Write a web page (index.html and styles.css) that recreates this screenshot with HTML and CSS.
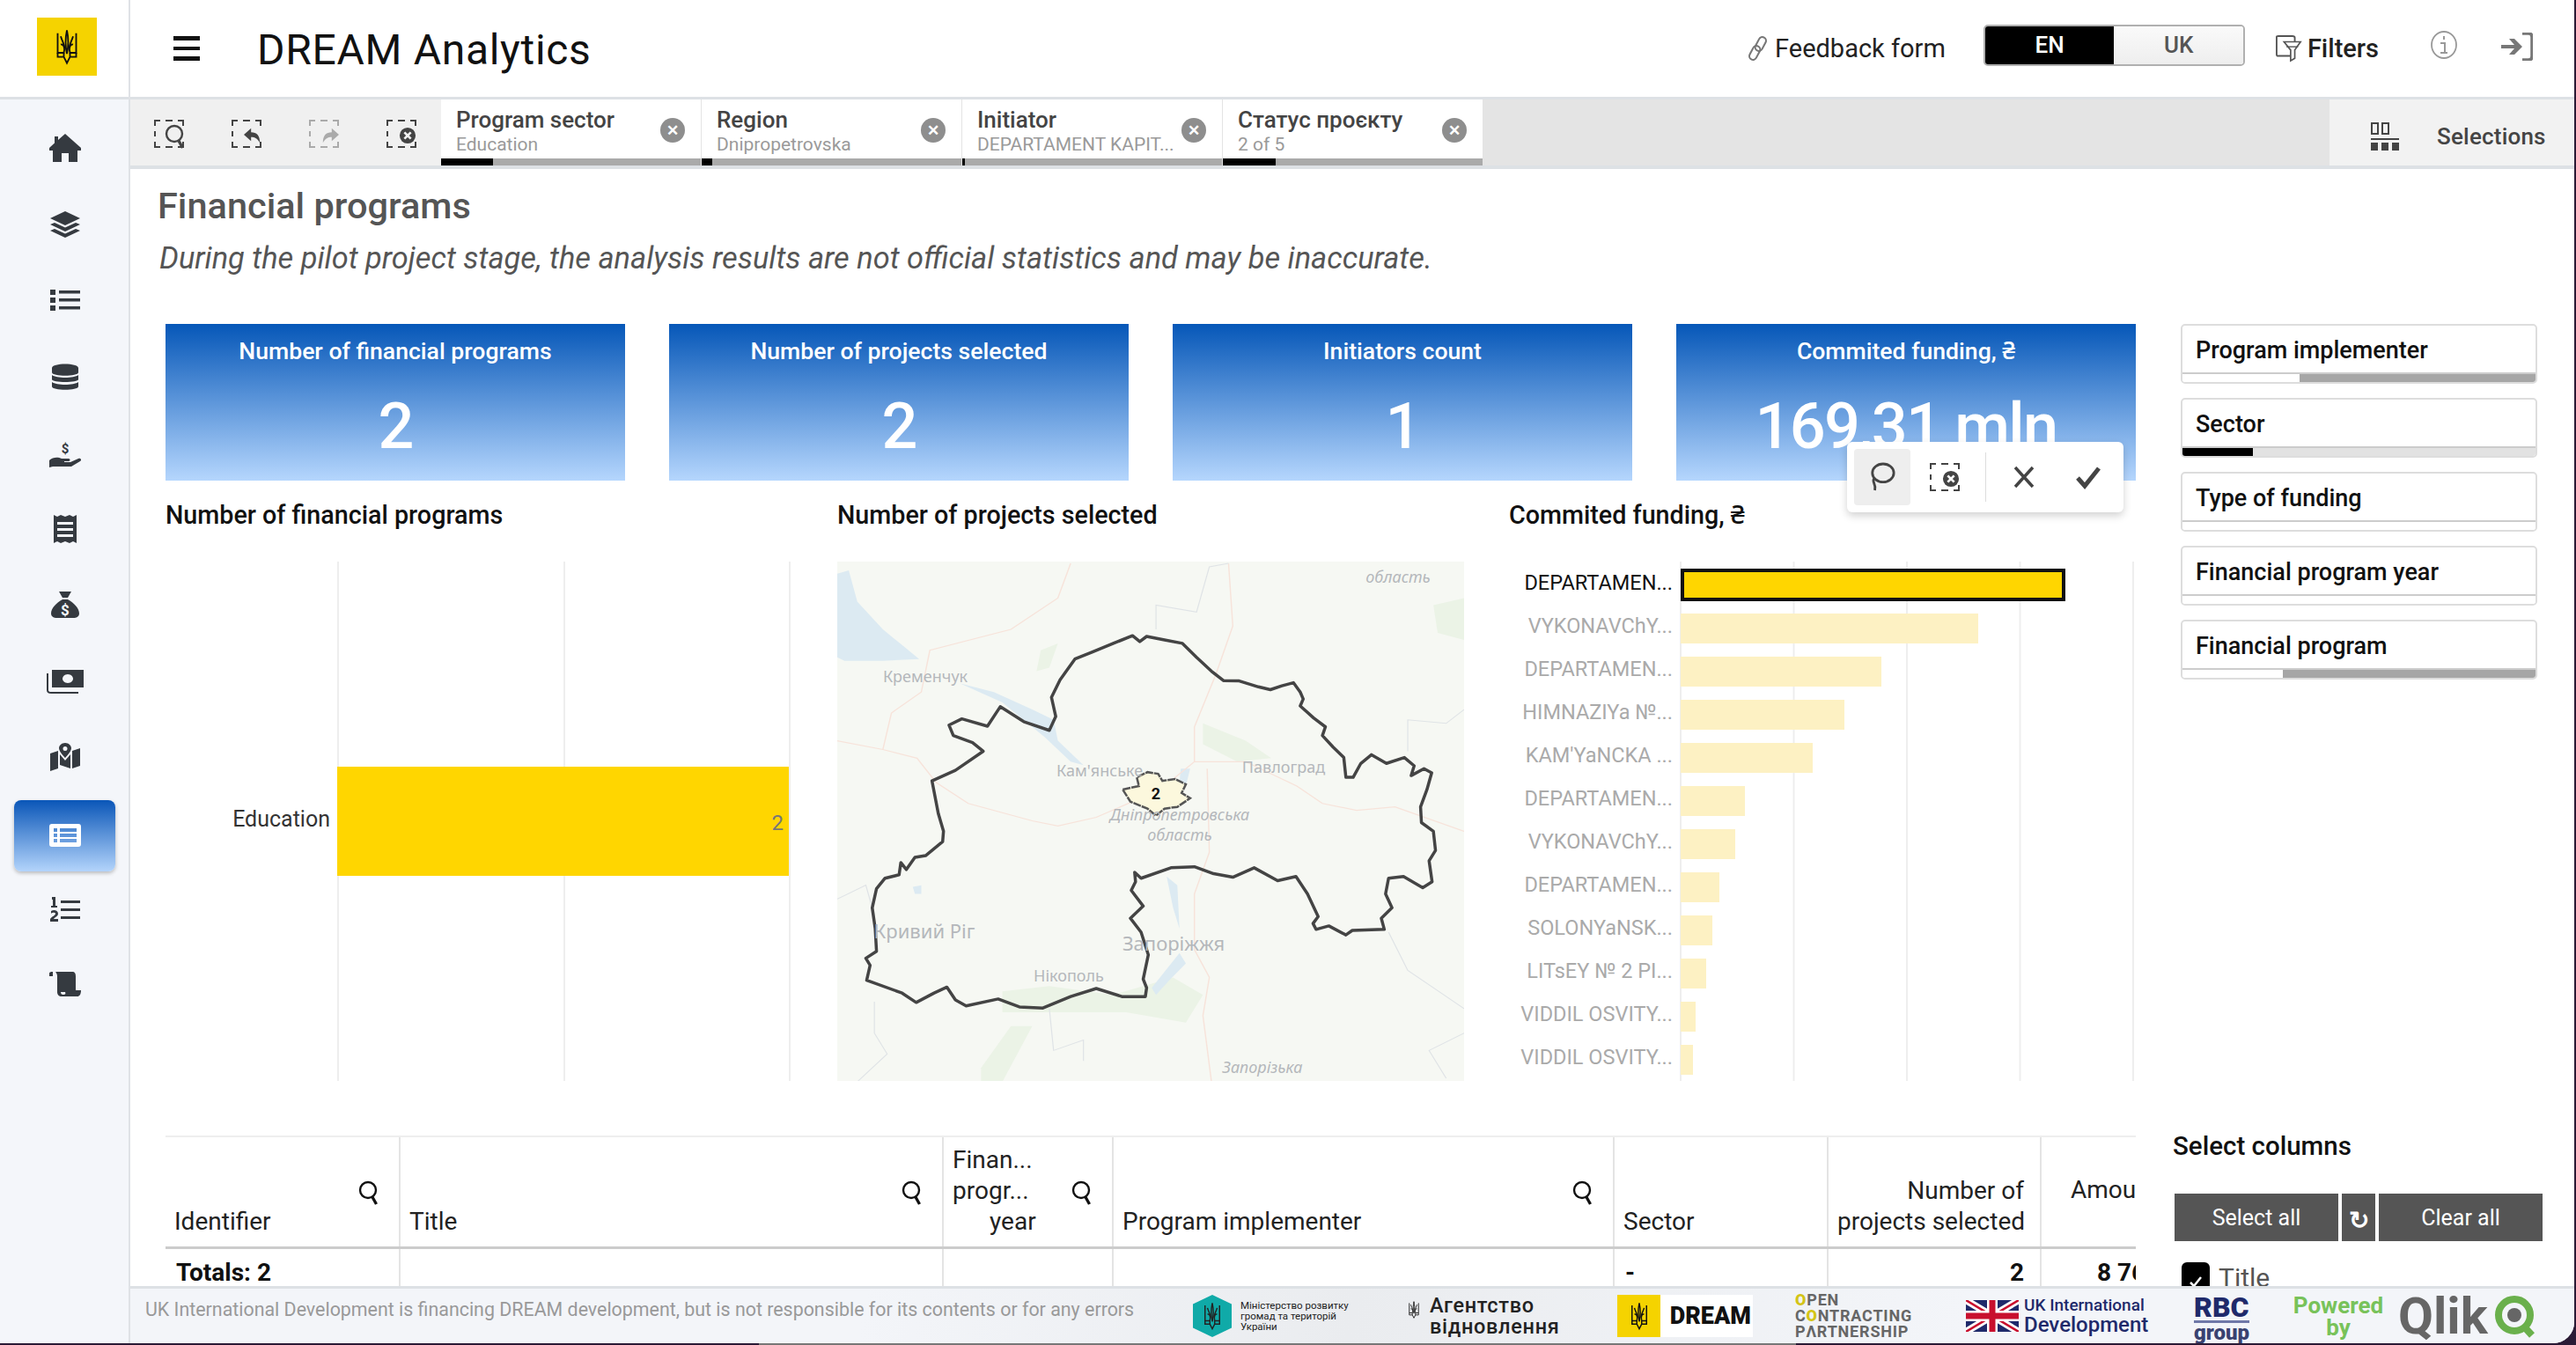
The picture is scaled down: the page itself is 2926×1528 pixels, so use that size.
FILE: index.html
```html
<!DOCTYPE html>
<html lang="en">
<head>
<meta charset="utf-8">
<title>DREAM Analytics</title>
<link rel="stylesheet" href="styles.css">
</head>
<body>
<svg class="defs" width="0" height="0" aria-hidden="true">
  <symbol id="trident" viewBox="0 0 24 36">
    <g fill="none" stroke="currentColor" stroke-width="1.6">
      <path d="M12 2C13.500 9 14 16 12 25C10 16 10.500 9 12 2Z"/>
      <path d="M3 5V24H9C10.500 19 8.500 15 6 16M6 8C7 12 9.500 15 10 20"/>
      <path d="M21 5V24H15C13.500 19 15.500 15 18 16M18 8C17 12 14.500 15 14 20"/>
      <path d="M3 24V28H9L12 34L15 28H21V24M9 24V28M15 24V28"/>
    </g>
  </symbol>
  <symbol id="dash" viewBox="0 0 34 32">
    <path d="M1 7V1H7M13 1H21M27 1H33V7M1 13V19M1 25V31H7M13 31H21M27 31H33V25" fill="none" stroke="currentColor" stroke-width="2"/>
  </symbol>
  <symbol id="loupe" viewBox="0 0 24 28">
    <circle cx="11" cy="11" r="9" fill="none" stroke="currentColor" stroke-width="2.400"/>
    <path d="M16 19L20.500 27" stroke="currentColor" stroke-width="3.400"/>
  </symbol>
</svg>

<div class="app">
  <aside class="sidebar">
    <div class="logo-cell">
      <div class="logo"><svg class="logo-tri"><use href="#trident"/></svg></div>
    </div>
    <nav class="nav">
      <a class="nav-item"><svg viewBox="0 0 36 36"><path d="M18 2L36 18V21H32V34H22V24H14V34H4V21H0V18L6 12.500V5H10V9Z"/></svg></a>
      <a class="nav-item"><svg viewBox="0 0 36 36"><path d="M18 3L35 11L18 19L1 11ZM1 18L6 16L18 21.500L30 16L35 18L18 26ZM1 25L6 23L18 28.500L30 23L35 25L18 33Z"/></svg></a>
      <a class="nav-item"><svg viewBox="0 0 36 36"><path d="M1 6H7V12H1ZM11 7H35V10.500H11ZM1 15H7V21H1ZM11 16H35V19.500H11ZM1 24H7V30H1ZM11 25H35V28.500H11Z"/></svg></a>
      <a class="nav-item"><svg viewBox="0 0 36 36"><path d="M3 8C3 2 33 2 33 8V13C33 18 3 18 3 13ZM3 16C8 20 28 20 33 16V21C33 25 3 25 3 21ZM3 24C8 28 28 28 33 24V29C33 34 3 34 3 29Z"/></svg></a>
      <a class="nav-item"><svg viewBox="0 0 36 36"><path d="M0 27C4 23 10 23 14 25H22C24 25 24 28 22 28H17V29H24L33 25C36 24 37 27 35 28L25 34H4L0 35Z"/><text x="18" y="19" class="nav-dollar">$</text></svg></a>
      <a class="nav-item"><svg viewBox="0 0 36 36"><path d="M5 2L9 4L13 2L18 4L23 2L27 4L31 2V34L27 32L23 34L18 32L13 34L9 32L5 34ZM9 10V13H27V10ZM9 17V20H27V17ZM9 24V27H27V24Z"/></svg></a>
      <a class="nav-item"><svg viewBox="0 0 36 36"><path d="M11 3H25L21 10H15ZM15 12H21C28 16 34 22 34 28C34 32 30 33 28 33H8C6 33 2 32 2 28C2 22 8 16 15 12Z"/><text x="18" y="30" class="nav-dollar inv">$</text></svg></a>
      <a class="nav-item"><svg class="wide" viewBox="0 0 42 36"><path d="M6 5H42V25H6ZM24 10C20 10 18 13 18 15C18 17 20 20 24 20C28 20 30 17 30 15C30 13 28 10 24 10Z" fill-rule="evenodd"/><path d="M1 9V28C1 30 3 31 5 31H36" fill="none" stroke="currentColor" stroke-width="2"/></svg></a>
      <a class="nav-item"><svg viewBox="0 0 36 36"><path d="M1 14L10 11V31L1 34ZM26 11L35 8V28L26 31ZM12 15L18 22L24 15V31L12 27ZM18 2C22 2 25 5 25 8C25 12 18 19 18 19C18 19 11 12 11 8C11 5 14 2 18 2ZM18 6A2.500 2.500 0 1 0 18 11A2.500 2.500 0 1 0 18 6Z" fill-rule="evenodd"/></svg></a>
      <a class="nav-item active"><svg viewBox="0 0 36 36"><path d="M3 5H33C35 5 36 6 36 8V28C36 30 35 31 33 31H3C1 31 0 30 0 28V8C0 6 1 5 3 5ZM5 10V14H9V10ZM12 10V14H31V10ZM5 16V20H9V16ZM12 16V20H31V16ZM5 22V26H9V22ZM12 22V26H31V22Z" fill-rule="evenodd"/></svg></a>
      <a class="nav-item"><svg viewBox="0 0 36 36"><path d="M13 8H35V11H13ZM13 17H35V20H13ZM13 26H35V29H13ZM3 4H7V14H9V16H2V14H4V7H3ZM2 20C5 18 10 19 10 23C10 26 6 27 5 29H10V32H1V29C3 26 7 25 7 23C7 22 4 21 2 23Z"/></svg></a>
      <a class="nav-item"><svg viewBox="0 0 36 36"><path d="M0 5C0 3 3 3 4 3V8H0ZM7 3H26C29 3 30 5 30 8V24H36C36 29 34 31 32 31H14C11 31 9 29 9 26V8C9 6 8 4 7 3ZM13 26C13 28 14 29 16 29C18 29 19 28 18 26Z"/></svg></a>
    </nav>
  </aside>

  <header class="topbar">
    <div class="burger"><i></i><i></i><i></i></div>
    <h1 class="brand">DREAM Analytics</h1>
    <div class="top-actions">
      <a class="feedback">
        <svg class="link-ico" viewBox="0 0 28 36"><g fill="none" stroke="#777" stroke-width="2.500"><rect x="13" y="2" width="10" height="20" rx="5" transform="rotate(28 18 12)"/><rect x="5" y="14" width="10" height="20" rx="5" transform="rotate(28 10 24)"/></g></svg>
        Feedback form
      </a>
      <div class="lang"><span class="lang-on">EN</span><span class="lang-off">UK</span></div>
      <a class="filters">
        <svg class="filter-ico" viewBox="0 0 32 32"><path d="M20 25H2C1 25 1 24 1 23V2C1 1 2 1 3 1H20C22 1 23 2 23 3V8" fill="none" stroke="#555" stroke-width="2"/><path d="M10 9H30L23 19V29L18 32V19Z" transform="translate(0,-1)" fill="#fff" stroke="#555" stroke-width="1.800"/><path d="M13 14H27" stroke="#555" stroke-width="1.500"/></svg>
        Filters
      </a>
      <svg class="info-ico" viewBox="0 0 30 32"><ellipse cx="15" cy="16" rx="14" ry="15" fill="none" stroke="#999" stroke-width="1.800"/><path d="M15 6V10M11 14H16V24M11 25H19" fill="none" stroke="#999" stroke-width="2"/></svg>
      <svg class="exit-ico" viewBox="0 0 36 32"><path d="M24 1H31C34 1 35 3 35 5V27C35 29 34 31 31 31H24" fill="none" stroke="#777" stroke-width="3.500"/><path d="M0 14H15L9 7H15L24 16L15 25H9L15 18H0Z" fill="#777"/></svg>
    </div>
  </header>

  <div class="toolbar">
    <div class="tools">
      <span class="tool"><svg class="t-dash"><use href="#dash"/></svg><svg class="t-in loupe"><use href="#loupe"/></svg></span>
      <span class="tool"><svg class="t-dash"><use href="#dash"/></svg><svg class="t-in" viewBox="0 0 22 22"><path d="M9 2V7C16 7 20 11 20 20C17 15 14 13 9 13V18L0 10Z"/></svg></span>
      <span class="tool off"><svg class="t-dash"><use href="#dash"/></svg><svg class="t-in" viewBox="0 0 22 22"><path d="M13 2V7C6 7 2 11 2 20C5 15 8 13 13 13V18L22 10Z"/></svg></span>
      <span class="tool"><svg class="t-dash"><use href="#dash"/></svg><svg class="t-in" viewBox="0 0 22 22"><circle cx="11" cy="11" r="10"/><path d="M7 7L15 15M15 7L7 15" stroke="#f2f2f2" stroke-width="3"/></svg></span>
    </div>
    <div class="tab">
      <div class="tab-body"><div class="tab-text"><b>Program sector</b><small>Education</small></div><span class="tab-x">✕</span></div>
      <div class="tab-bar"><i style="width:59px"></i></div>
    </div>
    <div class="tab">
      <div class="tab-body"><div class="tab-text"><b>Region</b><small>Dnipropetrovska</small></div><span class="tab-x">✕</span></div>
      <div class="tab-bar"><i style="width:12px"></i></div>
    </div>
    <div class="tab">
      <div class="tab-body"><div class="tab-text"><b>Initiator</b><small>DEPARTAMENT KAPIT...</small></div><span class="tab-x">✕</span></div>
      <div class="tab-bar"><i style="width:3px"></i></div>
    </div>
    <div class="tab">
      <div class="tab-body"><div class="tab-text"><b>Статус проєкту</b><small>2 of 5</small></div><span class="tab-x">✕</span></div>
      <div class="tab-bar"><i style="width:60px"></i></div>
    </div>
    <div class="tool-fill"></div>
    <div class="selections">
      <svg class="sel-ico" viewBox="0 0 32 32"><path d="M1 1H8V13H1ZM13 1H20V13H13Z" fill="none" stroke="#444" stroke-width="2"/><path d="M0 18H32V20H0ZM0 23H8V32H0ZM12 23H20V32H12ZM24 23H32V32H24Z" fill="#444"/></svg>
      <span>Selections</span>
    </div>
  </div>

  <main class="main">
    <h2 class="page-title">Financial programs</h2>
    <p class="page-note">During the pilot project stage, the analysis results are not official statistics and may be inaccurate.</p>
    <div class="columns">
      <div class="left">
        <section class="kpis">
          <div class="kpi"><div class="kpi-t">Number of financial programs</div><div class="kpi-v">2</div></div>
          <div class="kpi"><div class="kpi-t">Number of projects selected</div><div class="kpi-v">2</div></div>
          <div class="kpi"><div class="kpi-t">Initiators count</div><div class="kpi-v">1</div></div>
          <div class="kpi"><div class="kpi-t">Commited funding, ₴</div><div class="kpi-v">169,31 mln</div></div>
        </section>
        <div class="popup">
          <span class="pop-btn on"><svg viewBox="0 0 32 36"><ellipse cx="17" cy="13" rx="13" ry="11" fill="none" stroke="#444" stroke-width="3"/><path d="M6 20C3 24 9 26 7 34" fill="none" stroke="#444" stroke-width="3"/></svg></span>
          <span class="pop-btn sel"><svg class="t-dash"><use href="#dash"/></svg><svg class="t-in" viewBox="0 0 22 22"><circle cx="11" cy="11" r="10"/><path d="M7 7L15 15M15 7L7 15" stroke="#fff" stroke-width="3"/></svg></span>
          <i class="pop-sep"></i>
          <span class="pop-btn cancel"><svg viewBox="0 0 30 30"><path d="M5 4L25 26M25 4L5 26" stroke="#444" stroke-width="3.500"/></svg></span>
          <span class="pop-btn ok"><svg viewBox="0 0 30 30"><path d="M3 16L11 25L27 5" fill="none" stroke="#444" stroke-width="5"/></svg></span>
        </div>
        <section class="charts">
          <div class="chart">
            <h3 class="chart-t">Number of financial programs</h3>
            <div class="c1">
              <div class="c1-label">Education</div>
              <div class="c1-plot"><div class="c1-bar">2</div></div>
            </div>
          </div>
          <div class="chart">
            <h3 class="chart-t">Number of projects selected</h3>
            <svg class="map" viewBox="0 0 712 590">
              <rect width="712" height="590" fill="#f6f8f3"/>
              <g transform="scale(0.4847 0.3953) translate(-43 -45)">
                <g fill="#ebf3e6">
                  <path d="M900 510L1000 560L1060 610L980 620L900 570Z"/>
                  <path d="M1440 170L1512 150V270L1450 250Z"/>
                  <path d="M430 1280L540 1265L690 1290L830 1240L900 1290L860 1370L720 1340L560 1340L430 1340Z"/>
                  <path d="M380 1500L450 1380L500 1380L430 1540H380Z"/>
                  <path d="M520 300L560 280L540 350L510 360Z"/>
                </g>
                <g fill="#dceaf2">
                  <path d="M43 80L70 70L90 160L150 240L200 290L235 325L150 330L60 330L43 320Z"/>
                  <path d="M330 395L410 420L500 470L550 500L560 560L620 630L590 620L530 550L430 450Z"/>
                  <path d="M848 640L870 640L860 690L845 680Z"/>
                  <path d="M815 950L840 975L845 1100L830 1040ZM845 1170L860 1200L820 1250L790 1290L780 1270Z"/>
                  <path d="M220 980L240 975L240 1000L225 1000Z"/>
                </g>
                <g fill="none" stroke="#f7e3da" stroke-width="3">
                  <path d="M43 560L150 585L230 610L275 680L350 740L500 790L560 805L650 780L800 700L880 620L1000 620L1120 690L1180 740L1260 760L1350 750L1512 820"/>
                  <path d="M150 585L170 480L240 420L260 300L450 240L560 150L590 50"/>
                  <path d="M960 50L970 230L930 370L880 520L880 620M910 640L915 880L880 1000L880 1160L915 1240L900 1350L920 1540"/>
                </g>
                <g fill="none" stroke="#dfe3e6" stroke-width="2.500">
                  <path d="M43 1015L110 975L125 1040M130 1310L130 1400L160 1460L90 1540"/>
                  <path d="M1512 470L1470 510L1380 500L1380 590M1335 1110L1380 1220L1440 1270L1512 1330"/>
                  <path d="M790 240L790 170L885 190L915 60L960 50"/>
                  <path d="M540 1330L550 1450L620 1420L620 1480"/>
                  <path d="M1512 1400L1430 1450L1470 1530"/>
                </g>
                <path class="map-outline" d="M600 325L640 305L690 280L735 258L752 275L768 260L810 270L852 280L885 320L920 360L948 387L985 388L1030 405L1058 413L1085 402L1112 393L1128 420L1135 440L1128 460L1160 495L1187 520L1180 545L1205 578L1230 608L1235 665L1252 665L1270 625L1295 600L1330 625L1372 608L1395 632L1388 660L1418 640L1436 652L1425 700L1410 750L1412 795L1440 820L1445 875L1430 905L1437 965L1415 982L1370 950L1335 955L1328 1000L1343 1040L1318 1070L1325 1102L1250 1105L1235 1118L1195 1092L1165 1102L1158 1085L1170 1065L1145 1000L1118 950L1075 962L1020 925L970 952L925 942L880 922L825 925L755 955L740 938L742 965L732 990L760 1035L730 1070L755 1110L772 1175L760 1245L768 1270L765 1295L710 1295L650 1272L590 1295L525 1328L470 1325L420 1302L345 1322L320 1305L300 1268L270 1285L228 1312L195 1285L112 1248L120 1205L110 1185L135 1165L132 1100L125 1040L135 985L155 955L188 945L192 910L205 930L225 895L250 890L290 850L292 820L280 770L265 675L320 645L385 590L360 565L315 545L305 515L335 497L395 518L425 462L480 505L540 530L555 490L545 435L565 385Z"/>
                <path class="map-city" d="M712 700L750 690L745 665L770 650L795 655L805 675L835 670L860 685L850 710L870 725L840 750L810 755L790 775L770 755L730 735Z"/>
              </g>
              <g class="map-labels">
                <text x="100" y="137">Кременчук</text>
                <text x="298" y="244">Кам'янське</text>
                <text x="507" y="240">Павлоград</text>
                <text x="389" y="294" class="it">Дніпропетровська</text>
                <text x="389" y="317" class="it">область</text>
                <text x="99" y="428" class="big">Кривий Ріг</text>
                <text x="382" y="442" class="big">Запоріжжя</text>
                <text x="263" y="477">Нікополь</text>
                <text x="483" y="581" class="it">Запорізька</text>
                <text x="637" y="24" class="it">область</text>
              </g>
              <text x="362" y="270" class="map-count">2</text>
            </svg>
          </div>
          <div class="chart">
            <h3 class="chart-t">Commited funding, ₴</h3>
            <div class="c3">
              <div class="c3-labels">
                <div class="sel">DEPARTAMEN...</div>
                <div>VYKONAVChY...</div>
                <div>DEPARTAMEN...</div>
                <div>HIMNAZIYa №...</div>
                <div>KAM'YaNCKA ...</div>
                <div>DEPARTAMEN...</div>
                <div>VYKONAVChY...</div>
                <div>DEPARTAMEN...</div>
                <div>SOLONYaNSK...</div>
                <div>LITsEY № 2 PI...</div>
                <div>VIDDIL OSVITY...</div>
                <div>VIDDIL OSVITY...</div>
              </div>
              <div class="c3-plot">
                <div class="c3-row"><i class="sel" style="width:437px"></i></div>
                <div class="c3-row"><i style="width:338px"></i></div>
                <div class="c3-row"><i style="width:228px"></i></div>
                <div class="c3-row"><i style="width:186px"></i></div>
                <div class="c3-row"><i style="width:150px"></i></div>
                <div class="c3-row"><i style="width:73px"></i></div>
                <div class="c3-row"><i style="width:62px"></i></div>
                <div class="c3-row"><i style="width:44px"></i></div>
                <div class="c3-row"><i style="width:36px"></i></div>
                <div class="c3-row"><i style="width:29px"></i></div>
                <div class="c3-row"><i style="width:17px"></i></div>
                <div class="c3-row"><i style="width:14px"></i></div>
              </div>
            </div>
          </div>
        </section>
        <div class="table-wrap">
          <table class="grid">
            <colgroup><col class="w1"><col class="w2"><col class="w3"><col class="w4"><col class="w5"><col class="w6"><col class="w7"></colgroup>
            <thead>
              <tr>
                <th>Identifier<svg class="q"><use href="#loupe"/></svg></th>
                <th>Title<svg class="q"><use href="#loupe"/></svg></th>
                <th class="narrow">Finan...<br>progr...<br><span class="yr">year</span><svg class="q"><use href="#loupe"/></svg></th>
                <th>Program implementer<svg class="q"><use href="#loupe"/></svg></th>
                <th>Sector</th>
                <th class="num">Number of<br>projects selected</th>
                <th class="last">Amount of funding</th>
              </tr>
            </thead>
            <tbody>
              <tr>
                <td>Totals: 2</td><td></td><td></td><td></td><td>-</td><td class="num">2</td><td class="last-v">8 763 200</td>
              </tr>
            </tbody>
          </table>
        </div>
      </div>
      <aside class="right">
        <div class="fcards">
          <div class="fcard"><div class="fname">Program implementer</div><div class="fbar"><i class="grey" style="left:133px"></i></div></div>
          <div class="fcard"><div class="fname">Sector</div><div class="fbar alt"><i class="black" style="width:80px"></i></div></div>
          <div class="fcard"><div class="fname">Type of funding</div><div class="fbar"></div></div>
          <div class="fcard"><div class="fname">Financial program year</div><div class="fbar"></div></div>
          <div class="fcard"><div class="fname">Financial program</div><div class="fbar"><i class="grey" style="left:114px"></i></div></div>
        </div>
        <div class="colpick">
          <h3 class="colpick-t">Select columns</h3>
          <div class="colbtns">
            <button class="cbtn wide">Select all</button>
            <button class="cbtn small">↻</button>
            <button class="cbtn wide">Clear all</button>
          </div>
          <label class="colcheck"><span class="box"><svg viewBox="0 0 16 14"><path d="M2 8L6 12L14 2" fill="none" stroke="#fff" stroke-width="2.500"/></svg></span><span class="col-name">Title</span></label>
        </div>
      </aside>
    </div>
  </main>

  <footer class="footer">
    <div class="foot-note">UK International Development is financing DREAM development, but is not responsible for its contents or for any errors</div>
    <div class="foot-logos">
      <div class="lg lg-min">
        <span class="hex"><svg><use href="#trident"/></svg></span>
        <span class="min-t">Міністерство розвитку<br>громад та територій<br>України</span>
      </div>
      <div class="lg lg-agency">
        <svg class="ag-tri"><use href="#trident"/></svg>
        <span class="ag-t">Агентство<br>відновлення</span>
      </div>
      <div class="lg lg-dream">
        <span class="d-y"><svg><use href="#trident"/></svg></span>
        <span class="d-t">DREAM</span>
      </div>
      <div class="lg lg-ocp"><span><b class="y">O</b>PEN<br>C<b class="y">O</b>NTRACTING<br>P<b class="nb">Λ</b>RTNERSHIP</span></div>
      <div class="lg lg-uk">
        <svg class="flag" viewBox="0 0 60 36"><rect width="60" height="36" fill="#1f2a6b"/><path d="M0 0L60 36M60 0L0 36" stroke="#fff" stroke-width="8"/><path d="M0 0L60 36M60 0L0 36" stroke="#c8102e" stroke-width="2.500"/><path d="M30 0V36M0 18H60" stroke="#fff" stroke-width="12"/><path d="M30 0V36M0 18H60" stroke="#c8102e" stroke-width="7"/></svg>
        <span class="uk-t"><small>UK International</small>Development</span>
      </div>
      <div class="lg lg-rbc"><b>RBC</b><span>group</span></div>
      <div class="lg lg-pow">Powered<br>by</div>
      <div class="lg lg-qlik"><span>Qlik</span><svg viewBox="0 0 50 50"><circle cx="24" cy="24" r="18" fill="none" stroke="#6ab04c" stroke-width="8"/><circle cx="24" cy="24" r="8" fill="#666"/><path d="M34 36L44 47" stroke="#6ab04c" stroke-width="8"/></svg></div>
    </div>
  </footer>
</div>
</body>
</html>
```
FILE: styles.css
```css
* { box-sizing: border-box; }
html, body { margin: 0; height: 100%; }
body {
  width: 2926px;
  height: 1528px;
  overflow: hidden;
  font-family: Roboto, "Noto Sans", sans-serif;
  color: #111;
  background: linear-gradient(90deg, #2a1a35 0 862px, #777 862px 2040px, #2a1a35 2040px);
}
.defs { position: absolute; }
.app {
  width: 2924px;
  height: 1526px;
  display: grid;
  grid-template-columns: 148px 1fr;
  grid-template-rows: 113px 79px 1fr 65px;
  background: #fff;
  border-bottom-right-radius: 24px;
  overflow: hidden;
}
/* sidebar */
.sidebar {
  grid-row: 1 / 5;
  background: #f4f6fa;
  border-right: 2px solid #dfe2e6;
  display: flex;
  flex-direction: column;
}
.logo-cell {
  height: 113px;
  background: #fff;
  border-bottom: 3px solid #dde1e5;
  padding: 20px 0 0 42px;
}
.logo {
  width: 68px;
  height: 66px;
  background: #f5d300;
  display: flex;
  align-items: center;
  justify-content: center;
}
.logo-tri { width: 28px; height: 46px; color: #111; }
.nav { display: flex; flex-direction: column; align-items: center; padding: 12px 0 0 2px; }
.nav-item {
  width: 115px;
  height: 86.500px;
  display: flex;
  align-items: center;
  justify-content: center;
}
.nav-item svg { width: 36px; height: 36px; fill: #353a40; color: #353a40; }
.nav-item svg.wide { width: 42px; }
.nav-item.active {
  height: 81px;
  margin: 5px 0 0 -2px;
  border-radius: 8px;
  background: linear-gradient(180deg, #0a56b8, #b3d4fb);
  box-shadow: 0 2px 4px rgba(0,0,0,.25);
}
.nav-item.active svg { fill: #fff; margin-left: 2px; }
.nav-dollar { font-size: 15px; font-weight: 700; text-anchor: middle; fill: #353a40; }
.nav-dollar.inv { fill: #f4f6fa; font-size: 17px; }
/* topbar */
.topbar {
  background: #fff;
  display: flex;
  align-items: center;
  border-bottom: 3px solid #dde1e5;
  padding-left: 49px;
}
.burger { width: 30px; display: flex; flex-direction: column; gap: 7px; }
.burger i { display: block; height: 4.500px; background: #111; }
.brand { margin: 3px 0 0 65px; font-size: 48px; font-weight: 400; letter-spacing: .7px; color: #111; line-height: 1; }
.top-actions { margin-left: auto; display: flex; align-items: center; height: 100%; padding-right: 47px; }
.feedback { display: flex; align-items: center; font-size: 29px; gap: 6px; color: #222; margin-right: 43px; }
.link-ico { width: 27px; height: 30px; }
.lang { display: flex; width: 297px; height: 47px; border: 2px solid #b0b0b0; border-radius: 5px; overflow: hidden; font-size: 26px; font-weight: 500; margin: -8px 35px 0 0; }
.lang span { flex: 1; display: flex; align-items: center; justify-content: center; }
.lang-on { background: #000; color: #fff; }
.lang-off { background: linear-gradient(#fafafa, #eee); color: #555; }
.filters { display: flex; align-items: center; font-size: 29px; font-weight: 500; gap: 6px; color: #222; margin-right: 59px; }
.filter-ico { width: 30px; height: 32px; }
.info-ico { width: 30px; height: 32px; margin: -8px 50px 0 0; }
.exit-ico { width: 36px; height: 32px; margin-top: -4px; }
/* toolbar */
.toolbar { display: flex; background: #e4e4e4; height: 79px; border-bottom: 4px solid #dde1e5; }
.tools { width: 353px; background: #f0f0f0; display: flex; align-items: center; gap: 54px; padding: 0 0 0 27px; }
.tool { position: relative; width: 34px; height: 32px; color: #444; fill: #444; display: block; margin-top: 2px; }
.tool.off { color: #aaa; fill: #aaa; }
.t-dash { width: 34px; height: 32px; display: block; }
.t-in { position: absolute; right: 0; bottom: 3px; width: 20px; height: 22px; }
.t-in.loupe { right: -2px; bottom: -1px; width: 24px; height: 28px; }
.tab { width: 295px; margin-right: 1px; padding-top: 2px; background: #fff; display: flex; flex-direction: column; }
.tab-body { flex: 1; display: flex; align-items: center; padding: 0 18px 0 17px; }
.tab-text { flex: 1; min-width: 0; display: flex; flex-direction: column; white-space: nowrap; overflow: hidden; }
.tab-text b { font-size: 26px; font-weight: 500; color: #444; line-height: 32px; }
.tab-text small { font-size: 21px; color: #9a9a9a; line-height: 24px; }
.tab-x { width: 28px; height: 28px; border-radius: 50%; background: #8e8e8e; color: #fff; font-size: 17px; font-weight: 700; display: flex; align-items: center; justify-content: center; flex: none; }
.tab-bar { height: 8px; background: #aaa; }
.tab-bar i { display: block; height: 8px; background: #000; }
.tool-fill { flex: 1; }
.selections { width: 278px; background: #f2f2f2; display: flex; align-items: center; padding: 8px 0 0 47px; font-size: 26px; font-weight: 500; color: #444; gap: 43px; letter-spacing: .2px; }
.sel-ico { width: 32px; height: 32px; }
/* main */
.main { min-width: 0; overflow: hidden; padding: 0 42px 0 31px; }
.page-title { margin: 18px 0 0; font-size: 41.500px; line-height: 48px; font-weight: 500; color: #555; }
.page-note { margin: 15px 0 0 2px; font-size: 34.400px; line-height: 40px; font-style: italic; color: #555; }
.columns { display: grid; grid-template-columns: 2238px 456px; gap: 51px; margin: 55px 0 0 9px; }
.left { position: relative; min-width: 0; }
.kpis { display: grid; grid-template-columns: repeat(4, 522px); gap: 50px; }
.kpi { height: 178px; background: linear-gradient(180deg, #0657b8, #b5d6fd); color: #fff; text-align: center; }
.kpi-t { font-size: 26.600px; font-weight: 500; line-height: 36px; padding-top: 13px; }
.kpi-v { font-size: 72px; font-weight: 500; line-height: 80px; margin-top: 28px; letter-spacing: -1.700px; }
.popup {
  position: absolute;
  left: 1910px;
  top: 134px;
  width: 314px;
  height: 80px;
  background: #fff;
  border-radius: 6px;
  box-shadow: 0 4px 10px rgba(0,0,0,.18);
  display: flex;
  align-items: center;
  padding-left: 8px;
}
.pop-btn { position: relative; width: 64px; height: 64px; flex: none; display: flex; align-items: center; justify-content: center; border-radius: 4px; fill: #444; color: #444; }
.pop-btn svg { width: 30px; height: 34px; }
.pop-btn.on { background: #eee; }
.pop-btn.sel { margin-left: 7px; }
.pop-btn.sel .t-dash { width: 34px; height: 32px; }
.pop-btn.sel .t-in { width: 20px; height: 22px; right: 15px; bottom: 19px; }
.pop-sep { width: 1px; height: 56px; background: #ddd; margin-left: 14px; flex: none; }
.pop-btn.cancel { margin-left: 11px; }
.pop-btn.ok { margin-left: 9px; }
.charts { display: grid; grid-template-columns: repeat(3, 712px); gap: 51px; }
.chart-t { margin: 0; height: 92px; padding-top: 21px; font-size: 28.700px; line-height: 36px; font-weight: 500; color: #111; }
.c1 { display: flex; height: 590px; align-items: center; }
.c1-label { width: 187px; text-align: right; font-size: 25px; color: #333; margin-right: 8px; margin-top: -6px; }
.c1-plot { width: 515px; height: 100%; display: flex; align-items: center; background-image: linear-gradient(90deg, #eee 2px, transparent 2px); background-size: 257px 100%; border-right: 2px solid #eee; }
.c1-bar { width: 514px; height: 124px; background: #ffd600; text-align: right; padding: 50px 6px 0 0; font-size: 24px; color: #777; }
.map { width: 712px; height: 590px; display: block; }
.map-outline { fill: none; stroke: #444; stroke-width: 3.500; vector-effect: non-scaling-stroke; stroke-linejoin: round; }
.map-city { fill: #fcf8dd; stroke: #555; stroke-width: 2.500; vector-effect: non-scaling-stroke; stroke-dasharray: 9 1; }
.map-labels text { font-size: 18px; fill: #b4b7bb; text-anchor: middle; font-family: "Noto Sans", sans-serif; }
.map-labels .big { font-size: 22px; }
.map-labels .it { font-style: italic; }
.map-count { font-size: 18px; font-weight: 700; text-anchor: middle; fill: #111; }
.c3 { display: flex; height: 590px; }
.c3-labels { width: 186px; margin-right: 8px; padding-top: 1px; text-align: right; font-size: 23.500px; color: #aaa; white-space: nowrap; }
.c3-labels div { height: 49px; line-height: 46px; }
.c3-labels .sel { color: #111; }
.c3-plot { width: 516px; padding-top: 2px; background-image: linear-gradient(90deg, #eee 2px, transparent 2px); background-size: 128.500px 100%; }
.c3-row { height: 49px; display: flex; align-items: center; padding-left: 1px; }
.c3-row i { display: block; height: 34px; background: #fdf1c3; }
.c3-row i.sel { height: 37px; background: #ffd600; border: 4px solid #111; }
/* table */
.table-wrap { width: 2238px; overflow: hidden; margin-top: 62px; height: 171px; border-top: 2px solid #eee; }
.grid { border-collapse: collapse; table-layout: fixed; width: 2500px; font-size: 28px; }
.w1 { width: 266px; } .w2 { width: 617px; } .w3 { width: 193px; } .w4 { width: 569px; } .w5 { width: 243px; } .w6 { width: 242px; } .w7 { width: 370px; }
.grid th { position: relative; height: 125px; vertical-align: bottom; text-align: left; font-weight: 400; line-height: 35px; padding: 0 8px 11px 10px; border-right: 2px solid #e4e4e4; border-bottom: 3px solid #ccc; white-space: nowrap; color: #222; }
.grid th.num { text-align: right; padding-right: 18px; }
.grid th.last { padding: 0 0 47px 33px; border-right: 0; }
.grid td { height: 44px; vertical-align: top; padding: 9px 12px 0; font-weight: 700; line-height: 36px; border-right: 2px solid #e4e4e4; white-space: nowrap; }
.grid td.num { text-align: right; padding-right: 18px; }
.grid td.last-v { padding-left: 63px; border-right: 0; }
.yr { margin-left: 42px; }
.q { position: absolute; top: 49px; right: 22px; width: 24px; height: 28px; color: #111; }
/* right */
.right { display: flex; flex-direction: column; }
.fcards { display: flex; flex-direction: column; gap: 16px; }
.fcard { width: 405px; height: 68px; border: 2px solid #ddd; border-radius: 5px; display: flex; flex-direction: column; overflow: hidden; }
.fname { flex: 1; font-size: 27px; font-weight: 500; padding: 11px 0 0 15px; line-height: 34px; color: #111; }
.fbar { position: relative; height: 11px; border-top: 2px solid #ccc; background: #fff; }
.fbar.alt { background: #e2e2e2; }
.fbar i { position: absolute; top: 0; bottom: 0; right: 0; }
.fbar i.grey { background: #a6a6a6; }
.fbar i.black { background: #000; right: auto; left: 0; }
.colpick { margin-top: 512px; }
.colpick-t { margin: 0 0 0 -9px; font-size: 29.500px; line-height: 36px; font-weight: 500; }
.colbtns { display: flex; gap: 4px; margin: 36px 0 0 -7px; }
.cbtn { height: 54px; border: 0; background: #555; color: #fff; font: 400 25px Roboto, sans-serif; }
.cbtn.wide { width: 186px; }
.cbtn.small { width: 38px; font-size: 28px; font-weight: 700; padding: 6px 0 0; }
.colcheck { display: flex; align-items: flex-start; gap: 10px; margin: 24px 0 0 1px; font-size: 30px; line-height: 36px; color: #555; }
.box { width: 32px; height: 42px; border-radius: 6px; background: #000; display: flex; align-items: flex-start; justify-content: center; padding-top: 15px; }
.box svg { width: 16px; height: 14px; }
/* footer */
.footer { height: 65px; background: linear-gradient(100deg, #f3f5f9 30%, #eaecef 50%, #f3f5f9 75%); border-top: 3px solid #dde1e5; display: flex; align-items: center; padding-left: 17px; }
.foot-note { font-size: 21.400px; color: #999; white-space: nowrap; width: 1190px; margin-bottom: 16px; }
.foot-logos { display: flex; align-items: center; height: 48px; }
.lg { display: flex; align-items: center; height: 48px; white-space: nowrap; }
.hex { width: 44px; height: 48px; background: #10aaa8; clip-path: polygon(50% 0, 100% 22%, 100% 78%, 50% 100%, 0 78%, 0 22%); display: flex; align-items: center; justify-content: center; color: #222; }
.hex svg { width: 22px; height: 34px; }
.min-t { font-size: 11.500px; line-height: 12px; margin-left: 10px; width: 190px; color: #222; }
.ag-tri { width: 14px; height: 24px; margin: -14px 0 0 0; color: #222; }
.ag-t { font-size: 23.500px; line-height: 24px; font-weight: 500; margin-left: 11px; width: 213px; color: #222; letter-spacing: .7px; }
.d-y { width: 49px; height: 48px; background: #f5d300; display: flex; align-items: center; justify-content: center; color: #111; }
.d-y svg { width: 22px; height: 36px; }
.d-t { width: 105px; height: 48px; background: #fff; font-size: 27px; font-weight: 900; line-height: 48px; text-align: right; padding-right: 2px; color: #111; }
.lg-dream { margin-right: 48px; }
.lg-ocp { font-size: 18px; line-height: 18px; font-weight: 700; color: #666; width: 194px; letter-spacing: .8px; }
.lg-ocp .y { color: #d4c417; font-weight: 900; }
.lg-ocp .nb { font-weight: 700; }
.flag { width: 60px; height: 36px; }
.uk-t { margin-left: 6px; display: flex; flex-direction: column; font-size: 24px; line-height: 24px; color: #1f2a6b; font-weight: 500; width: 193px; }
.uk-t small { font-size: 19px; line-height: 20px; }
.lg-rbc { flex-direction: column; width: 104px; align-items: flex-start; color: #1f2a6b; }
.lg-rbc b { font-size: 32px; line-height: 29px; font-weight: 900; border-bottom: 3px solid #6f78a8; }
.lg-rbc span { font-size: 24px; line-height: 22px; font-weight: 900; color: #3a4270; }
.lg-pow { display: block; width: 128px; text-align: center; font-size: 26px; line-height: 25px; font-weight: 700; color: #78c25a; margin-left: -4px; }
.lg-qlik { font-size: 58px; font-weight: 700; color: #666; gap: 6px; line-height: 48px; margin-left: 4px; }
.lg-qlik svg { width: 50px; height: 50px; }
```
